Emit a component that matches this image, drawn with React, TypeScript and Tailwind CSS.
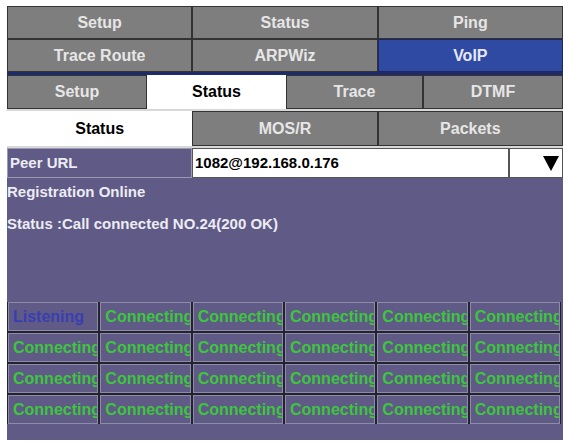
import React from "react";

const font = { fontFamily: '"Liberation Sans", Arial, sans-serif' };

function Tab({ label, active, blue }: { label: string; active?: boolean; blue?: boolean }) {
  const cls = active
    ? "bg-white text-black"
    : blue
    ? "bg-[#2f4aa3] text-[#e6e8f4] border border-[#1e2760]"
    : "bg-[#7e7e7e] text-[#e6e6e6] border border-[#333]";
  return (
    <div className={`flex items-center justify-center font-bold text-[16px] leading-none ${cls}`}>
      {label}
    </div>
  );
}

export default function App() {
  const cells: { t: string; listen?: boolean }[] = [];
  for (let i = 0; i < 24; i++) cells.push(i === 0 ? { t: "Listening", listen: true } : { t: "Connecting" });
  return (
    <div className="w-[568px] h-[444px] bg-white pt-[6px] pl-[7px]" style={font}>
      <div className="w-[556px] h-[434px] bg-[#5f5a86] flex flex-col">
        <div className="bg-[#9a9a9a] flex flex-col">
          <div className="grid grid-cols-3 h-[33px]">
            <Tab label="Setup" />
            <Tab label="Status" />
            <Tab label="Ping" />
          </div>
          <div className="grid grid-cols-3 h-[33px]">
            <Tab label="Trace Route" />
            <Tab label="ARPWiz" />
            <Tab label="VoIP" blue />
          </div>
          <div className="h-[3px] bg-[#1f2a68]" />
          <div className="grid grid-cols-[140px_139px_137px_140px] h-[34px] bg-white">
            <Tab label="Setup" />
            <Tab label="Status" active />
            <Tab label="Trace" />
            <Tab label="DTMF" />
          </div>
          <div className="h-[2px] bg-[#d8d8d8]" />
          <div className="grid grid-cols-3 h-[35px]">
            <Tab label="Status" active />
            <Tab label="MOS/R" />
            <Tab label="Packets" />
          </div>
          <div className="h-[2px] bg-[#d8d8d8]" />
        </div>
        <div className="flex h-[30px]">
          <div className="w-[185px] border border-[#9c99b3] flex items-center pl-[2px] text-[15px] font-bold text-[#ececf3]">
            Peer URL
          </div>
          <div className="flex-1 bg-white border border-[#555] flex items-center pl-[2px] text-[15px] font-bold text-black">
            1082@192.168.0.176
          </div>
          <div className="w-[54px] bg-white border border-[#555] flex items-center justify-end pr-[2px]">
            <svg width="18" height="18" viewBox="0 0 18 18">
              <polygon points="1,2 17,2 9,17" fill="#000" />
            </svg>
          </div>
        </div>
        <div className="text-[15px] font-bold text-[#ececf3] pt-[5px] leading-[18px]">Registration Online</div>
        <div className="text-[15px] font-bold text-[#ececf3] pt-[14px] leading-[18px]">Status :Call connected NO.24(200 OK)</div>
        <div className="mt-[69px] grid grid-cols-6 bg-[#232330] gap-[2px] px-[1px] w-[554px]">
          {cells.map((c, i) => (
            <div
              key={i}
              className="h-[29px] bg-[#5f5a86] border border-[#8e8ba6] overflow-hidden whitespace-nowrap flex items-center pl-[4px] text-[16px] font-bold"
            >
              <span className={c.listen ? "text-[#3a3fb0]" : "text-[#3dc63d]"}>{c.t}</span>
            </div>
          ))}
        </div>
      </div>
    </div>
  );
}
